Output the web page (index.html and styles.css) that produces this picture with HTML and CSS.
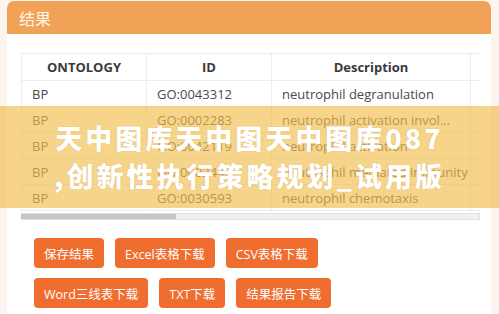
FILE: index.html
```html
<!DOCTYPE html>
<html lang="zh-CN">
<head>
<meta charset="utf-8">
<title>结果</title>
<link rel="stylesheet" href="styles.css">
</head>
<body>
<div class="page">
  <section class="card">
    <header class="card-head">结果</header>
    <div class="card-body">
      <div class="table-wrap">
        <table class="result-table">
          <colgroup>
            <col class="c-ont"><col class="c-id"><col class="c-desc"><col class="c-rest"><col class="c-rest"><col class="c-rest"><col class="c-rest"><col class="c-rest">
          </colgroup>
          <thead>
            <tr><th>ONTOLOGY</th><th>ID</th><th>Description</th><th>GeneRatio</th><th>BgRatio</th><th>pvalue</th><th>p.adjust</th><th>qvalue</th></tr>
          </thead>
          <tbody>
            <tr><td>BP</td><td>GO:0043312</td><td>neutrophil degranulation</td><td>12/180</td><td>485/18670</td><td>1.2e-05</td><td>0.0031</td><td>0.0027</td></tr>
            <tr><td>BP</td><td>GO:0002283</td><td>neutrophil activation invol...</td><td>12/180</td><td>498/18670</td><td>1.5e-05</td><td>0.0031</td><td>0.0027</td></tr>
            <tr><td>BP</td><td>GO:0042119</td><td>neutrophil activation</td><td>12/180</td><td>501/18670</td><td>1.6e-05</td><td>0.0031</td><td>0.0027</td></tr>
            <tr><td>BP</td><td>GO:0002446</td><td>neutrophil mediated immunity</td><td>12/180</td><td>502/18670</td><td>1.7e-05</td><td>0.0031</td><td>0.0027</td></tr>
            <tr><td>BP</td><td>GO:0030593</td><td>neutrophil chemotaxis</td><td>5/180</td><td>92/18670</td><td>2.1e-04</td><td>0.0120</td><td>0.0104</td></tr>
          </tbody>
        </table>
      </div>
      <div class="scrollbar"><div class="scrollbar-thumb"></div></div>
      <div class="actions">
        <div class="btn-row">
          <button class="btn">保存结果</button>
          <button class="btn">Excel表格下载</button>
          <button class="btn">CSV表格下载</button>
        </div>
        <div class="btn-row">
          <button class="btn">Word三线表下载</button>
          <button class="btn">TXT下载</button>
          <button class="btn">结果报告下载</button>
        </div>
      </div>
    </div>
  </section>
  <div class="banner">
    <p class="banner-text">天中图库天中图天中图库087<br>,创新性执行策略规划_试用版</p>
  </div>
</div>
</body>
</html>
```

FILE: styles.css
```css
* { box-sizing: border-box; }

html, body {
  margin: 0;
  padding: 0;
  background: #fcf4ee;
}

body {
  width: 499px;
  height: 314px;
  overflow: hidden;
  font-family: "Open Sans", "Noto Sans CJK SC", sans-serif;
}

.page {
  position: relative;
  padding: 1px 8px 0 7px;
  height: 314px;
}

.card {
  background: #ffffff;
  border-radius: 7px 7px 0 0;
  height: 313px;
}

.card-head {
  background: #f2a257;
  color: #fff6ea;
  height: 33px;
  border-radius: 7px 7px 0 0;
  padding: 6px 12px 0;
  font-family: "Noto Sans CJK SC", sans-serif;
  font-size: 16px;
  line-height: 22px;
}

.card-body {
  padding: 19px 4px 0 14px;
}

.table-wrap {
  width: 459px;
  overflow: hidden;
}

.scrollbar {
  width: 459px;
  height: 7px;
  margin-top: 2px;
  background: #f1f1f1;
  border: 1px solid #e0e0e0;
  border-left: none;
}

.scrollbar-thumb {
  width: 155px;
  height: 100%;
  background: #c4c4c4;
}

.result-table {
  width: 1354px;
  table-layout: fixed;
  border-collapse: collapse;
  font-size: 13px;
  color: #4a4a4a;
}

.c-ont { width: 125px; }
.c-id { width: 125px; }
.c-desc { width: 199px; }

.result-table th,
.result-table td {
  border: 1px solid #ececec;
  white-space: nowrap;
  overflow: hidden;
}

.result-table th {
  height: 27px;
  padding: 0 10px;
  text-align: center;
  font-weight: 700;
  color: #3a3a3a;
}

.result-table td {
  height: 26px;
  padding: 0 10px;
  text-align: left;
}

.actions {
  padding: 18px 0 0 13px;
  display: flex;
  flex-direction: column;
  gap: 10px;
}

.btn-row {
  display: flex;
  gap: 11px;
}

.btn {
  height: 30px;
  padding: 0 10px;
  border: none;
  border-radius: 4px;
  background: #ee6d2f;
  color: #ffffff;
  font-family: "Open Sans", "Noto Sans CJK SC", sans-serif;
  font-size: 12.5px;
}

.banner {
  position: absolute;
  left: 0;
  right: 0;
  top: 106px;
  height: 102px;
  background: rgba(242, 190, 78, 0.66);
  display: flex;
  align-items: center;
  justify-content: center;
}

.banner-text {
  margin: 0;
  text-align: center;
  font-family: "Noto Sans CJK SC", sans-serif;
  font-weight: 900;
  font-size: 27px;
  letter-spacing: 3px;
  line-height: 38px;
  color: #ffffff;
  text-shadow: 0 0 1px rgba(150, 110, 40, 0.4);
}
```
